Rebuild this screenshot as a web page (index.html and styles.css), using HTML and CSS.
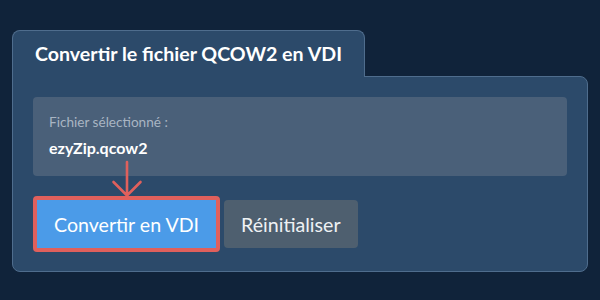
FILE: index.html
```html
<!DOCTYPE html>
<html lang="fr">
<head>
<meta charset="utf-8">
<title>Convertir QCOW2 en VDI</title>
<link rel="stylesheet" href="styles.css">
</head>
<body>
<div class="card">
  <div class="tab"><h1 class="tab-title">Convertir le fichier QCOW2 en VDI</h1></div>
  <div class="panel">
    <div class="file-box">
      <div class="file-label">Fichier sélectionné :</div>
      <div class="file-name">ezyZip.qcow2</div>
    </div>
    <div class="actions">
      <div class="highlight">
        <svg class="arrow" width="30" height="38" viewBox="0 0 30 38" aria-hidden="true">
          <path d="M15 3 V36.5 M1.5 23 L15 36.5 L28.5 23" fill="none" stroke="#e0605c" stroke-width="2.6" stroke-linecap="round" stroke-linejoin="round"/>
        </svg>
        <button class="btn btn-primary" type="button">Convertir en VDI</button>
      </div>
      <button class="btn btn-secondary" type="button">Réinitialiser</button>
    </div>
  </div>
</div>
</body>
</html>
```
FILE: styles.css
```css
* { box-sizing: border-box; }
html, body { height: 100%; }
body {
  margin: 0;
  background: #10233a;
  font-family: Lato, "Noto Sans", sans-serif;
  color: #ffffff;
}
.card {
  padding: 30px 12px 0 12px;
}
.tab {
  display: inline-block;
  position: relative;
  z-index: 1;
  margin-bottom: -1px;
  background: #2c4a6a;
  border: 1px solid #4f6d8d;
  border-bottom: none;
  border-radius: 8px 8px 0 0;
  padding: 11px 22px 11px 22px;
}
.tab-title {
  margin: 0;
  font-size: 19.6px;
  line-height: 24px;
  font-weight: 700;
  color: #ffffff;
  white-space: nowrap;
}
.panel {
  background: #2c4a6a;
  border: 1px solid #4f6d8d;
  border-radius: 0 8px 8px 8px;
  padding: 20px 20px 19px 20px;
}
.file-box {
  background: #4a6079;
  border-radius: 4px;
  padding: 16px 16px 18px 16px;
}
.file-label {
  font-size: 13.6px;
  line-height: 18px;
  color: #a9b5c3;
  margin-bottom: 7px;
}
.file-name {
  font-size: 16px;
  line-height: 20px;
  font-weight: 700;
  color: #ffffff;
}
.actions {
  display: flex;
  align-items: center;
  gap: 4px;
  margin-top: 20px;
}
.highlight {
  position: relative;
  border: 4px solid #e0605c;
  border-radius: 4px;
  display: flex;
}
.arrow {
  position: absolute;
  left: 50%;
  margin-left: -15px;
  bottom: calc(100% + 3px);
  overflow: visible;
}
.btn {
  height: 48px;
  padding: 0 17px;
  border: none;
  font-family: Lato, "Noto Sans", sans-serif;
  font-size: 19.6px;
  color: #ffffff;
  cursor: pointer;
}
.btn-primary {
  background: #4b9be8;
  border-radius: 0;
}
.btn-secondary {
  background: #4e5f6f;
  border-radius: 4px;
  color: #eef1f4;
}
```
